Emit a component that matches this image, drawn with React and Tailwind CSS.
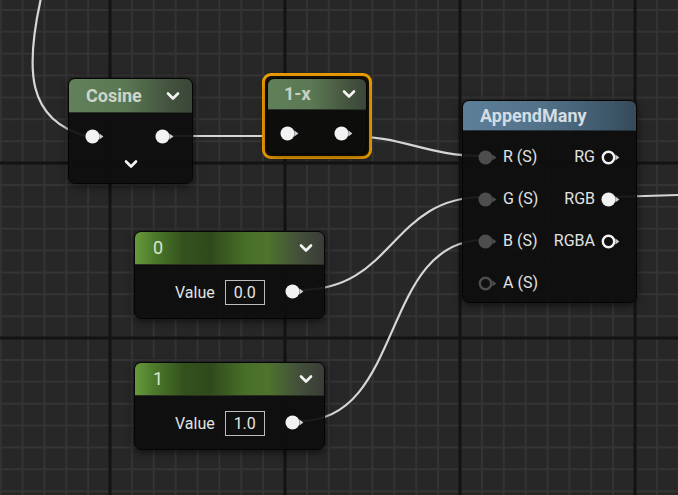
import React from "react";

const FONT = "font-['Roboto','Liberation_Sans',sans-serif]";

function Pin({ kind = "white" }) {
  // kinds: white, whiteHollow, dark, darkHollow
  const isDark = kind.startsWith("dark");
  const hollow = kind.endsWith("Hollow");
  const c = isDark ? "#4d4d4d" : "#f2f2f2";
  return (
    <svg width="19" height="15" viewBox="0 0 19 15" className="shrink-0">
      {hollow ? (
        <circle cx="7.5" cy="7.5" r="5.7" fill="#111" stroke={c} strokeWidth="2.4" />
      ) : (
        <circle cx="7.5" cy="7.5" r="7" fill={c} />
      )}
      <polygon points="14.4,4.6 18.4,7.5 14.4,10.4" fill={isDark ? c : "#cfcfcf"} />
    </svg>
  );
}

function Chevron({ className = "" }) {
  return (
    <svg width="14" height="10" viewBox="0 0 14 10" className={className}>
      <polyline points="2,2.5 7,7.5 12,2.5" fill="none" stroke="#f4f4f4" strokeWidth="2.6" strokeLinecap="round" strokeLinejoin="round" />
    </svg>
  );
}

function Grid() {
  const minor = [];
  const major = [];
  for (let k = -6; k <= 28; k++) {
    const x = 110 + k * 21.875;
    if (x < -4 || x > 690) continue;
    const isMajor = ((k % 8) + 8) % 8 === 0;
    (isMajor ? major : minor).push(
      <line key={"v" + k} x1={x} y1={0} x2={x} y2={495} stroke={isMajor ? "#131313" : "#343434"} strokeWidth={isMajor ? 3 : 2} />
    );
  }
  for (let k = -9; k <= 16; k++) {
    const y = 163 + k * 21.875;
    if (y < -4 || y > 500) continue;
    const isMajor = ((k % 8) + 8) % 8 === 0;
    (isMajor ? major : minor).push(
      <line key={"h" + k} x1={0} y1={y} x2={678} y2={y} stroke={isMajor ? "#131313" : "#343434"} strokeWidth={isMajor ? 3 : 2} />
    );
  }
  return (
    <svg className="absolute inset-0" width="678" height="495">
      {minor}
      {major}
    </svg>
  );
}

function Wires() {
  const s = { fill: "none", stroke: "#d6d6d6", strokeWidth: 2.2 };
  return (
    <svg className="absolute inset-0" width="678" height="495">
      <path d="M 41 -2 C 25 70, 27 120, 86 136" {...s} />
      <path d="M 168 136 L 284 136" {...s} />
      <path d="M 348 136 C 405 136, 425 156, 484 156" {...s} />
      <path d="M 300 290 C 395 290, 390 197, 484 197" {...s} />
      <path d="M 300 421 C 405 421, 380 240, 484 240" {...s} />
      <path d="M 612 197 L 678 195" {...s} />
    </svg>
  );
}

const body = "bg-[rgba(13,14,13,0.93)] shadow-[0_2px_8px_rgba(0,0,0,0.6)] border border-[#050505] rounded-[7px] overflow-hidden";

function Cosine() {
  return (
    <div className={`absolute left-[68px] top-[78px] w-[125px] h-[106px] flex flex-col ${body}`}>
      <div className="h-[34px] shrink-0 flex items-center justify-between pl-[17px] pr-[12px] bg-[linear-gradient(90deg,#62815a_0%,#5a7853_45%,#44543f_80%,#3b4638_100%)] border-b border-[#2a3328]">
        <span className="text-[18px] font-bold text-[#cdd5ca] leading-none">Cosine</span>
        <Chevron />
      </div>
      <div className="flex-1 flex flex-col items-center">
        <div className="w-full flex justify-between pl-[16px] pr-[18px] mt-[16px]">
          <Pin />
          <Pin />
        </div>
        <Chevron className="mt-[15px]" />
      </div>
    </div>
  );
}

function OneMinusX() {
  return (
    <div className="absolute left-[262px] top-[73px] w-[110px] h-[86px] rounded-[9px] border-[3px] border-[#f2a100] p-[2px] bg-[#1a1206]">
      <div className={`w-full h-full flex flex-col ${body}`}>
        <div className="h-[31px] shrink-0 flex items-center justify-between pl-[16px] pr-[10px] bg-[linear-gradient(90deg,#60805a_0%,#5a7853_45%,#45553f_80%,#3b4638_100%)] border-b border-[#2a3328]">
          <span className="text-[18px] font-bold text-[#c9d1c6] leading-none">1-x</span>
          <Chevron />
        </div>
        <div className="flex justify-between pl-[12px] pr-[13px] mt-[16px]">
          <Pin />
          <Pin />
        </div>
      </div>
    </div>
  );
}

function Row({ inKind, inLabel, outLabel, outKind }) {
  return (
    <div className="h-[42px] flex items-center justify-between pl-[15px] pr-[16px]">
      <div className="flex items-center gap-[6px]">
        <Pin kind={inKind} />
        <span className="text-[16px] text-[#e2e2e2] leading-none">{inLabel}</span>
      </div>
      {outLabel ? (
        <div className="flex items-center gap-[6px]">
          <span className="text-[16px] text-[#e2e2e2] leading-none">{outLabel}</span>
          <Pin kind={outKind} />
        </div>
      ) : null}
    </div>
  );
}

function AppendMany() {
  return (
    <div className={`absolute left-[462px] top-[100px] w-[175px] h-[203px] flex flex-col ${body}`}>
      <div className="h-[30px] shrink-0 flex items-center pl-[17px] bg-[linear-gradient(90deg,#5d7f97_0%,#52728a_45%,#405a6d_80%,#354a5a_100%)] border-b border-[#26323c]">
        <span className="text-[18px] font-bold text-[#d5dde3] leading-none">AppendMany</span>
      </div>
      <div className="pt-[5px] flex flex-col">
        <Row inKind="dark" inLabel="R (S)" outLabel="RG" outKind="whiteHollow" />
        <Row inKind="dark" inLabel="G (S)" outLabel="RGB" outKind="white" />
        <Row inKind="dark" inLabel="B (S)" outLabel="RGBA" outKind="whiteHollow" />
        <Row inKind="darkHollow" inLabel="A (S)" />
      </div>
    </div>
  );
}

function Constant({ top, title, value }) {
  return (
    <div className={`absolute left-[134px] w-[191px] h-[88px] flex flex-col ${body}`} style={{ top }}>
      <div className="h-[33px] shrink-0 flex items-center justify-between pl-[18px] pr-[11px] bg-[linear-gradient(90deg,#689b3b_0%,#4d7a2b_10%,#33511d_26%,#2f4a1b_40%,#476f28_58%,#4f732d_70%,#43513a_86%,#3a3c38_100%)] border-b border-[#262f20]">
        <span className="text-[18px] text-[#d9e6cf] leading-none">{title}</span>
        <Chevron />
      </div>
      <div className="flex items-center mt-[15px] pl-[40px]">
        <span className="text-[16px] text-[#e2e2e2] leading-none">Value</span>
        <div className="ml-[10px] w-[40px] h-[25px] border-[1.5px] border-[#bdbdbd] flex items-center justify-center text-[16px] text-[#e6e6e6] leading-none">
          {value}
        </div>
        <div className="ml-[20px] mt-[-3px]">
          <Pin />
        </div>
      </div>
    </div>
  );
}

export default function App() {
  return (
    <div className={`relative w-[678px] h-[495px] overflow-hidden bg-[#272727] ${FONT}`}>
      <Grid />
      <Wires />
      <Cosine />
      <OneMinusX />
      <AppendMany />
      <Constant top="231px" title="0" value="0.0" />
      <Constant top="362px" title="1" value="1.0" />
    </div>
  );
}
